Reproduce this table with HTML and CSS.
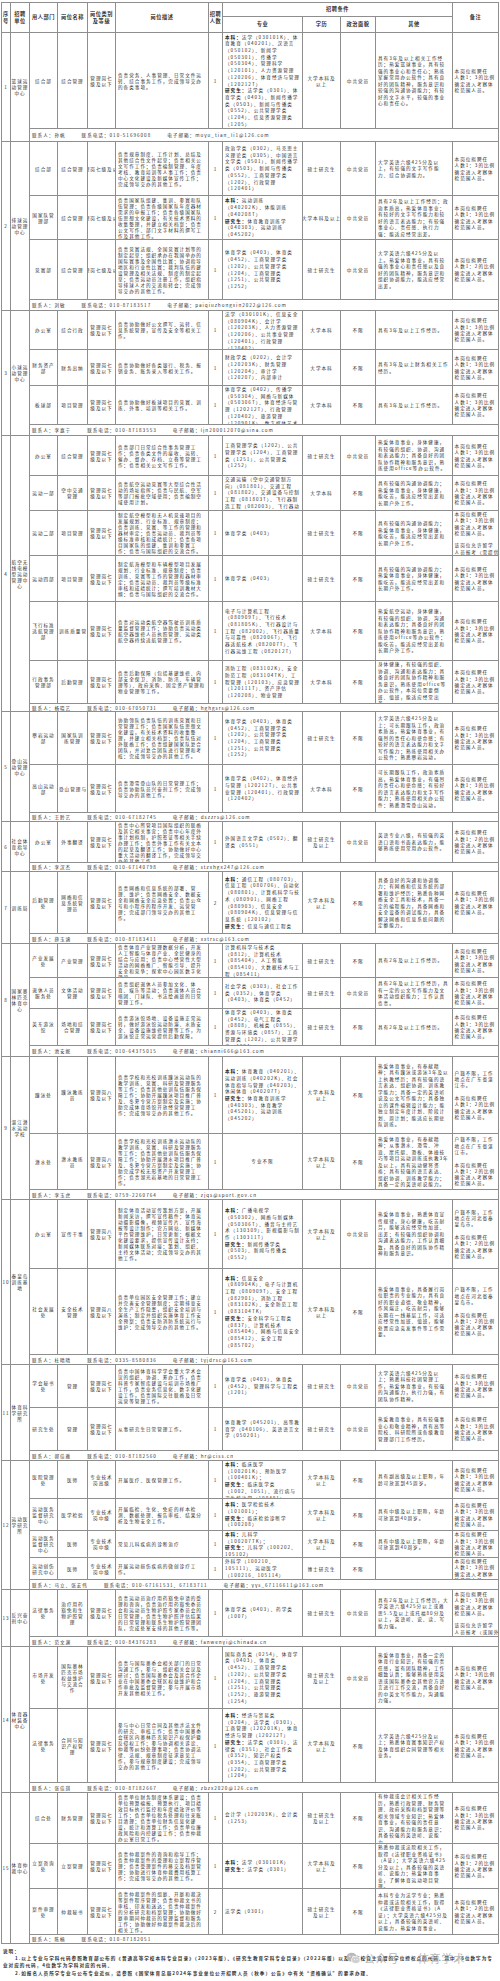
FILE: index.html
```html
<!DOCTYPE html>
<html lang="zh-CN">
<head>
<meta charset="utf-8">
<title>招聘岗位表</title>
<link rel="stylesheet" href="styles.css">
</head>
<body>
<div class="page">
<table class="t">
<colgroup>
<col class="w-n"><col class="w-u"><col class="w-d"><col class="w-p"><col class="w-k"><col class="w-ds"><col class="w-q"><col class="w-m"><col class="w-e"><col class="w-z"><col class="w-o"><col class="w-b">
</colgroup>
<thead>
<tr class="h1">
<th rowspan="2">序号</th><th rowspan="2">招聘单位</th><th rowspan="2">用人部门</th><th rowspan="2">岗位名称</th><th rowspan="2">岗位类别及等级</th><th rowspan="2">岗位描述</th><th rowspan="2">招聘人数</th><th colspan="4">招聘条件</th><th rowspan="2">备注</th>
</tr>
<tr class="h2"><th>专业</th><th>学历</th><th>政治面貌</th><th>其他</th></tr>
</thead>
<tbody>
<!-- 1 -->
<tr style="--h:96px">
<td class="n" rowspan="2">1</td><td class="u" rowspan="2">篮球运动管理中心</td>
<td class="d"><div class="c">综合部</div></td>
<td class="p"><div class="c">综合管理</div></td>
<td class="k"><div class="c">管理岗七级及以下</div></td>
<td class="ds"><div class="c">负责党务、人事管理、日常文件运转、综合事务工作，完成领导交办的各类事项。</div></td>
<td class="q"><div class="c">1</div></td>
<td class="m"><div class="c"><b>本科：</b>法学（030101K）、体育教育（040201）、汉语言（050102）、新闻学（050301）、传播学（050304）、管理科学（120101）、人力资源管理（120206）、体育经济与管理（120212T）<br><b>研究生：</b>法学类（0301）、体育学类（0403）、新闻传播学类（0503）、新闻与传播类（0552）、公共管理学类（1204）、信息资源管理类（1205）</div></td>
<td class="e"><div class="c">大学本科及以上</div></td>
<td class="z"><div class="c">中共党员</div></td>
<td class="o"><div class="c">具有3年及以上相关工作经历；热爱篮球事业，具有较强的事业心和责任心；熟练掌握常用办公软件；具有良好的团队精神，服务意识和较强的沟通协调能力；有较好的文字水平，较强的事业心和责任心。</div></td>
<td class="b"><div class="c">本岗位拟聘任<br>人数1：3的比例<br>确定进入考察体<br>检范围人员。</div></td>
</tr>
<tr class="ct" style="--h:13px"><td colspan="10"><div class="c"><span>联系人：孙帆</span><span>联系电话：010-51696008</span><span>电子邮箱：moyu_tian_li1@126.com</span></div></td></tr>

<!-- 2 -->
<tr style="--h:54px">
<td class="n" rowspan="4">2</td><td class="u" rowspan="4">排球运动管理中心</td>
<td class="d"><div class="c">综合部</div></td>
<td class="p"><div class="c">综合管理</div></td>
<td class="k"><div class="c nw">管理岗七级及以下</div></td>
<td class="ds"><div class="c">负责规章制度、工作计划、总结及其他综合性文件起草；负责相关公文写作工作；负责编制管理、年度考核、教育培训等人事工作；负责中心文化建设及新媒体宣传工作；完成领导交办的其他工作。</div></td>
<td class="q"><div class="c">1</div></td>
<td class="m"><div class="c">政治学类（0302）、马克思主义理论类（0305）、中国语言文学类（0501）、新闻传播学类（0503）、新闻与传播类（0552）、工商管理学类（1202）、行政管理（120401）</div></td>
<td class="e"><div class="c">硕士研究生</div></td>
<td class="z"><div class="c">中共党员</div></td>
<td class="o"><div class="c">大学英语六级425分及以上，有较强的文字写作能力、综合协调能力。</div></td>
<td class="b"><div class="c">本岗位拟聘任<br>人数1：3的比例<br>确定进入考察体<br>检范围人员。</div></td>
</tr>
<tr style="--h:44px">
<td class="d"><div class="c">国家队管理部</div></td>
<td class="p"><div class="c">综合管理</div></td>
<td class="k"><div class="c nw">管理岗七级及以下</div></td>
<td class="ds"><div class="c">负责国家队组建、集训、参赛和队伍管理；负责各级国家队年度器材需求的申报工作；负责各级国家队伍思想文化建设，有关技术资料的收集整理，并建立相关档案；负责公文写作、部门文字材料的撰写工作及其他工作。</div></td>
<td class="q"><div class="c">1</div></td>
<td class="m"><div class="c"><b>本科：</b>运动训练（040202K）、体能训练（040208T）<br><b>研究生：</b>体育教育训练学（040303）、运动训练（045202）</div></td>
<td class="e"><div class="c nw">大学本科及以上</div></td>
<td class="z"><div class="c">中共党员</div></td>
<td class="o"><div class="c">具有2年及以上工作经历；政治素质高，热爱体育事业；有较好的文字写作能力和较好的语言表达能力；有较强事业心、责任感、执行力强；能适应经常出差。</div></td>
<td class="b"><div class="c">本岗位拟聘任<br>人数1：3的比例<br>确定进入考察体<br>检范围人员。</div></td>
</tr>
<tr style="--h:60px">
<td class="d"><div class="c">竞赛部</div></td>
<td class="p"><div class="c">综合管理</div></td>
<td class="k"><div class="c nw">管理岗七级及以下</div></td>
<td class="ds"><div class="c">负责竞赛法规、全国竞赛计划等的制定起草；组织承办在我国举办的国际赛事及全国性比赛；协调指导地区和行业性比赛；裁判队伍的建设管理及相关法规、制度的制定起草；负责运动员注册工作，组织指导排球人才的交流和转会；完成领导交办的其他工作。</div></td>
<td class="q"><div class="c">1</div></td>
<td class="m"><div class="c">体育学类（0403）、体育类（0452）、工商管理学类（1202）、公共管理学类（1204）、工商管理类（1251）、公共管理类（1252）</div></td>
<td class="e"><div class="c">硕士研究生</div></td>
<td class="z"><div class="c">中共党员</div></td>
<td class="o"><div class="c">大学英语六级425分及以上。热爱体育事业，具有较强的事业心和责任感以及良好的团队精神，服务意识和组织协调能力，能适应经常出差。</div></td>
<td class="b"><div class="c">本岗位拟聘任<br>人数1：2的比例<br>确定进入考察体<br>检范围人员。</div></td>
</tr>
<tr class="ct" style="--h:11px"><td colspan="10"><div class="c"><span>联系人：刘敏</span><span>联系电话：010-87183517</span><span>电子邮箱：paiqiuzhongxin2022@126.com</span></div></td></tr>

<!-- 3 -->
<tr style="--h:39px">
<td class="n" rowspan="4">3</td><td class="u" rowspan="4">小球运动管理中心</td>
<td class="d"><div class="c">办公室</div></td>
<td class="p"><div class="c">综合行政</div></td>
<td class="k"><div class="c">管理岗七级及以下</div></td>
<td class="ds"><div class="c">负责协助做好公文撰写、运转、信息系统管理，宣传及安全等相关工作。</div></td>
<td class="q"><div class="c">1</div></td>
<td class="m"><div class="c">法学（030101K）、信息安全（080904K）、会计学（120203K）、人力资源管理（120206）、公共事业管理（120401）、行政管理（120402）</div></td>
<td class="e"><div class="c">大学本科</div></td>
<td class="z"><div class="c">不限</div></td>
<td class="o"><div class="c">具有3年及以上工作经历。</div></td>
<td class="b"><div class="c">本岗位拟聘任<br>人数1：3的比例<br>确定进入考察体<br>检范围人员。</div></td>
</tr>
<tr style="--h:36px">
<td class="d"><div class="c">财务资产部</div></td>
<td class="p"><div class="c">财务出纳</div></td>
<td class="k"><div class="c">管理岗七级及以下</div></td>
<td class="ds"><div class="c">负责协助做好各类银行、税务、报销业务、账务录入等相关工作。</div></td>
<td class="q"><div class="c">1</div></td>
<td class="m"><div class="c">财政学类（0202）、会计学（120203K）、财务管理（120204）、审计学（120207）、内部审计</div></td>
<td class="e"><div class="c">大学本科</div></td>
<td class="z"><div class="c">不限</div></td>
<td class="o"><div class="c">具有3年及以上财务相关工作经历。</div></td>
<td class="b"><div class="c">本岗位拟聘任<br>人数1：3的比例<br>确定进入考察体<br>检范围人员。</div></td>
</tr>
<tr style="--h:39px">
<td class="d"><div class="c">板球部</div></td>
<td class="p"><div class="c">项目管理</div></td>
<td class="k"><div class="c">管理岗七级及以下</div></td>
<td class="ds"><div class="c">负责协助做好板球项目的竞赛、训练、外事、培训等相关工作。</div></td>
<td class="q"><div class="c">1</div></td>
<td class="m"><div class="c">体育学类（0402）、传播学（050304）、网络与新媒体（050306T）、体育经济与管理（120212T）、行政管理（120402）、旅游管理（120901K）、数字媒体艺术</div></td>
<td class="e"><div class="c">大学本科</div></td>
<td class="z"><div class="c">不限</div></td>
<td class="o"><div class="c">具有3年及以上工作经历。</div></td>
<td class="b"><div class="c">本岗位拟聘任<br>人数1：3的比例<br>确定进入考察体<br>检范围人员。</div></td>
</tr>
<tr class="ct" style="--h:11px"><td colspan="10"><div class="c"><span>联系人：李嘉宁</span><span>联系电话：010-87183553</span><span>电子邮箱：ljn200012070@sina.com</span></div></td></tr>

<!-- 4 -->
<tr style="--h:40px">
<td class="n" rowspan="7">4</td><td class="u" rowspan="7">航空无线电模型运动管理中心</td>
<td class="d"><div class="c">办公室</div></td>
<td class="p"><div class="c">综合管理</div></td>
<td class="k"><div class="c">管理岗七级及以下</div></td>
<td class="ds"><div class="c">负责部门日常综合性事务管理工作；负责各类文件的接收、运转、催办、督办、存档、立卷等管理工作；负责相关公文写作工作。</div></td>
<td class="q"><div class="c">1</div></td>
<td class="m"><div class="c">工商管理学类（1202）、公共管理学类（1204）、工商管理类（1251）、公共管理类（1252）</div></td>
<td class="e"><div class="c">硕士研究生</div></td>
<td class="z"><div class="c">中共党员</div></td>
<td class="o"><div class="c">热爱体育事业，身体健康，有较强的组织、协调、沟通和表达能力；具备良好的团队协作精神和服务意识，熟练使用office等办公软件。</div></td>
<td class="b"><div class="c">本岗位拟聘任<br>人数1：3的比例<br>确定进入考察体<br>检范围人员。</div></td>
</tr>
<tr style="--h:35px">
<td class="d"><div class="c">运动一部</div></td>
<td class="p"><div class="c">空中交通管理</div></td>
<td class="k"><div class="c">管理岗七级及以下</div></td>
<td class="ds"><div class="c">负责航空运动竞赛等大型综合性活动的场址指挥；负责与民航、空军等部门报批空域使用；负责编制空域使用计划。</div></td>
<td class="q"><div class="c">1</div></td>
<td class="m"><div class="c">交通运输（空中交通管制方向）（081801）、交通工程（081802）、交通设备与控制工程（081803T）、飞行器制造工程（082003）、飞行器动力工程</div></td>
<td class="e"><div class="c">大学本科</div></td>
<td class="z"><div class="c">不限</div></td>
<td class="o"><div class="c">具有较强的沟通协调能力；热爱体育事业，身体健康，能吃苦，能适应经常出差和长期户外工作。</div></td>
<td class="b"><div class="c">本岗位拟聘任<br>人数1：3的比例<br>确定进入考察体<br>检范围人员。</div></td>
</tr>
<tr style="--h:45px">
<td class="d"><div class="c">运动二部</div></td>
<td class="p"><div class="c">项目管理</div></td>
<td class="k"><div class="c">管理岗七级及以下</div></td>
<td class="ds"><div class="c">制定航空模型和无人机竞速项目的发展规划、行业标准、规章制度；负责训练、竞赛、等工作的管理和器材审定；负责运动员、裁判员等级标准审核和成绩统计；负责各项目国家队的组建、集训和参赛工作；负责与国际组织的交流合作。</div></td>
<td class="q"><div class="c">1</div></td>
<td class="m"><div class="c">体育学类（0403）</div></td>
<td class="e"><div class="c">硕士研究生</div></td>
<td class="z"><div class="c">不限</div></td>
<td class="o"><div class="c">具有较强的沟通协调能力；热爱体育事业，身体健康，能吃苦，能适应经常出差和长期户外工作。</div></td>
<td class="b"><div class="c">本岗位拟聘任<br>人数1：3的比例<br>确定进入考察体<br>检范围人员。<br><br>该岗位允许留学<br>人员报考（需提供学历认证）</div></td>
</tr>
<tr style="--h:46px">
<td class="d"><div class="c">运动四部</div></td>
<td class="p"><div class="c">项目管理</div></td>
<td class="k"><div class="c">管理岗七级及以下</div></td>
<td class="ds"><div class="c">制定航海模型和车辆模型项目发展规划、行业标准、规章制度；负责训练、竞赛等工作的管理和器材审定；负责运动员、裁判员等级标准审核和成绩统计；撰写培训教材大纲；负责与国际组织的交流合作。</div></td>
<td class="q"><div class="c">1</div></td>
<td class="m"><div class="c">体育学类（0403）</div></td>
<td class="e"><div class="c">硕士研究生</div></td>
<td class="z"><div class="c">不限</div></td>
<td class="o"><div class="c">具有较强的沟通协调能力；热爱体育事业，身体健康，能吃苦，能适应经常出差和长期户外工作。</div></td>
<td class="b"><div class="c">本岗位拟聘任<br>人数1：3的比例<br>确定进入考察体<br>检范围人员。</div></td>
</tr>
<tr style="--h:59px">
<td class="d"><div class="c">飞行标准适航管理部</div></td>
<td class="p"><div class="c nwl">训练质量管理</div></td>
<td class="k"><div class="c">管理岗七级及以下</div></td>
<td class="ds"><div class="c">负责对运动类航空器驾驶员训练质量监督管理工作；协助负责运动类航空器维修人员执照管理、运动类航空器持续适航管理工作。</div></td>
<td class="q"><div class="c">1</div></td>
<td class="m"><div class="c">电子与计算机工程（080909T）、飞行技术（081805K）、飞行器设计与工程（082002）、飞行器质量与可靠性（082006T）、飞行器适航技术（082007T）、飞行器运维工程（082012T）</div></td>
<td class="e"><div class="c">大学本科</div></td>
<td class="z"><div class="c">不限</div></td>
<td class="o"><div class="c">热爱航空运动，身体健康，有较强的组织、协调、沟通和表达能力；具备良好的团队协作精神和服务意识，熟练使用office等办公软件；能吃苦，能适应经常出差和长期户外工作。</div></td>
<td class="b"><div class="c">本岗位拟聘任<br>人数1：3的比例<br>确定进入考察体<br>检范围人员。</div></td>
</tr>
<tr style="--h:43px">
<td class="d"><div class="c">行政事务管理部</div></td>
<td class="p"><div class="c">后勤管理</div></td>
<td class="k"><div class="c">管理岗七级及以下</div></td>
<td class="ds"><div class="c">负责后勤保障（包括基建维修、内部安全保卫、消防、防汛、车辆管理等）、政府采购、固定资产管理和物业管理等工作。</div></td>
<td class="q"><div class="c">1</div></td>
<td class="m"><div class="c">消防工程（083102K）、安全防范工程（083104TK）、工程管理（120103）、应急管理（120111T）、资产评估（120208）、物业管理</div></td>
<td class="e"><div class="c">大学本科</div></td>
<td class="z"><div class="c">不限</div></td>
<td class="o"><div class="c">身体健康，有较强的组织、协调、沟通和表达能力；具备良好的团队协作精神和服务意识，熟练使用office等办公软件，本岗位需要倒班、值班，能适应经常出差。</div></td>
<td class="b"><div class="c">本岗位拟聘任<br>人数1：3的比例<br>确定进入考察体<br>检范围人员。</div></td>
</tr>
<tr class="ct" style="--h:8px"><td colspan="10"><div class="c"><span>联系人：杨晓艺</span><span>联系电话：010-67050731</span><span>电子邮箱：hghgsrs@126.com</span></div></td></tr>

<!-- 5 -->
<tr style="--h:53px">
<td class="n" rowspan="3">5</td><td class="u" rowspan="3">登山运动管理中心</td>
<td class="d"><div class="c">攀岩运动部</div></td>
<td class="p"><div class="c">国家队训练管理</div></td>
<td class="k"><div class="c">管理岗七级及以下</div></td>
<td class="ds"><div class="c">协助领队负责队伍的训练竞赛和日常管理工作；负责国家队伍思想文化建设，有关技术资料的收集整理，并建立相关档案；负责队伍对外联络工作；负责组建国家队复合团队，并对复合团队进行管理和考核；完成领导交办的其他工作。</div></td>
<td class="q"><div class="c">1</div></td>
<td class="m"><div class="c">体育学类（0403）、体育类（0452）、工商管理学类（1202）、公共管理学类（1204）、工商管理类（1251）、公共管理类（1252）</div></td>
<td class="e"><div class="c">硕士研究生</div></td>
<td class="z"><div class="c">不限</div></td>
<td class="o"><div class="c">大学英语六级425分及以上；可长期跟队工作，政治素质高，热爱体育事业，有强烈的责任心和使命感；有较好的语言表达能力和文字写作能力；熟练使用相关办公软件；熟悉攀岩运动。</div></td>
<td class="b"><div class="c">本岗位拟聘任<br>人数1：3的比例<br>确定进入考察体<br>检范围人员。</div></td>
</tr>
<tr style="--h:48px">
<td class="d"><div class="c">高山运动部</div></td>
<td class="p"><div class="c nwl">登山管理与服务</div></td>
<td class="k"><div class="c">管理岗七级及以下</div></td>
<td class="ds"><div class="c">负责滑雪登山队的日常管理工作；负责协助队员兴奋剂工作；完成领导交办的其他工作。</div></td>
<td class="q"><div class="c">1</div></td>
<td class="m"><div class="c">体育学类（0402）、体育经济与管理（120212T）、公共事业管理（120401）、行政管理（120402）</div></td>
<td class="e"><div class="c">大学本科</div></td>
<td class="z"><div class="c">不限</div></td>
<td class="o"><div class="c">可长期跟队工作，政治素质高，热爱体育事业，有强烈的责任心和使命感；有较好的语言表达能力和文字写作能力；熟练使用相关办公软件；熟悉滑雪登山运动。</div></td>
<td class="b"><div class="c">本岗位拟聘任<br>人数1：3的比例<br>确定进入考察体<br>检范围人员。</div></td>
</tr>
<tr class="ct" style="--h:9px"><td colspan="10"><div class="c"><span>联系人：王聆艺</span><span>联系电话：010-67182745</span><span>电子邮箱：dszzrs@126.com</span></div></td></tr>

<!-- 6 -->
<tr style="--h:41px">
<td class="n" rowspan="2">6</td><td class="u" rowspan="2">社会体育指导中心</td>
<td class="d"><div class="c">办公室</div></td>
<td class="p"><div class="c">外事翻译</div></td>
<td class="k"><div class="c">管理岗七级及以下</div></td>
<td class="ds"><div class="c">负责中心所管项目国际组织的联络及其它相关事宜；负责中心年度外事计划拟制，护照签证等相关手续办理工作；负责外事工作有关文本的起草及翻译工作；协助做好中心重大活动的翻译工作，完成领导交办的其他工作。</div></td>
<td class="q"><div class="c">1</div></td>
<td class="m"><div class="c">外国语言文学类（0502）、翻译类（0551）</div></td>
<td class="e"><div class="c">硕士研究生及以上</div></td>
<td class="z"><div class="c">中共党员</div></td>
<td class="o"><div class="c">英语专业八级，有较强的英语口语和书面表达能力，能够熟练使用常用办公软件。</div></td>
<td class="b"><div class="c">本岗位拟聘任<br>人数1：2的比例<br>确定进入考察体<br>检范围人员。</div></td>
</tr>
<tr class="ct" style="--h:9px"><td colspan="10"><div class="c"><span>联系人：李汉杰</span><span>联系电话：010-67140798</span><span>电子邮箱：stzxhgx247@126.com</span></div></td></tr>

<!-- 7 -->
<tr style="--h:62px">
<td class="n" rowspan="2">7</td><td class="u" rowspan="2">训练局</td>
<td class="d"><div class="c">后勤管理处</div></td>
<td class="p"><div class="c">网络和信息系统管理员</div></td>
<td class="k"><div class="c">管理岗七级及以下</div></td>
<td class="ds"><div class="c">负责网络和信息系统的部署、管理、维护；负责网络安全、数据安全和网络安全应急处置；负责公众号和小程序的程序开发、运营管理；完成部门领导交办的其他工作。</div></td>
<td class="q"><div class="c">2</div></td>
<td class="m"><div class="c"><b>本科：</b>通信工程（080703）、信息工程（080706）、自动化（080801）、计算机科学与技术（080901）、网络工程（080903）、信息安全（080904K）、信息管理与信息系统（120102）<br><b>研究生：</b>信息与通信工程类</div></td>
<td class="e"><div class="c">大学本科及以上</div></td>
<td class="z"><div class="c">不限</div></td>
<td class="o"><div class="c">具备良好的沟通和协调能力；有网络和信息系统的部署和维护经历；熟悉各种网络安全工具和技术，具备一定的编程能力，具备网络和安全设备的调试能力，具备解决网络和信息系统问题的定额能力。</div></td>
<td class="b"><div class="c">本岗位拟聘任<br>人数1：3的比例<br>确定进入考察体<br>检范围人员。</div></td>
</tr>
<tr class="ct" style="--h:10px"><td colspan="10"><div class="c"><span>联系人：薛玉涵</span><span>联系电话：010-87183411</span><span>电子邮箱：xxtrsc@163.com</span></div></td></tr>

<!-- 8 -->
<tr style="--h:34px">
<td class="n" rowspan="4">8</td><td class="u" rowspan="4">国家奥林匹克体育中心</td>
<td class="d"><div class="c">产业发展处</div></td>
<td class="p"><div class="c">产业管理</div></td>
<td class="k"><div class="c">管理岗七级及以下</div></td>
<td class="ds"><div class="c">负责体育产业管理数据分析，开发人工智能与体育产业、全民健身的结合与应用；负责中心经营性大型活动的网络推广、智能引导、提升安全和竞争；探索中心园区数字化建设。</div></td>
<td class="q"><div class="c">1</div></td>
<td class="m"><div class="c">计算机科学与技术类（0812）、计算机技术（085404）、人工智能（085410）、大数据技术与工程（085411）</div></td>
<td class="e"><div class="c">硕士研究生</div></td>
<td class="z"><div class="c">不限</div></td>
<td class="o"><div class="c">具有2年及以上工作经历。</div></td>
<td class="b"><div class="c">本岗位拟聘任<br>人数1：3的比例<br>确定进入考察体<br>检范围人员。</div></td>
</tr>
<tr style="--h:31px">
<td class="d"><div class="c">退休人员服务处</div></td>
<td class="p"><div class="c">文体活动管理</div></td>
<td class="k"><div class="c">管理岗七级及以下</div></td>
<td class="ds"><div class="c">负责组织退休人员参加文化、体育、娱乐等活动；负责退休人员合唱团、门球队、书法绘画班的日常管理工作。</div></td>
<td class="q"><div class="c">1</div></td>
<td class="m"><div class="c">社会学类（0303）、社会工作类（0352）、体育学类（0403）、体育类（0452）</div></td>
<td class="e"><div class="c">硕士研究生</div></td>
<td class="z"><div class="c">中共党员</div></td>
<td class="o"><div class="c">具有2年及以上工作经历，具有一定的公文写作能力及文体活动组织能力；工作认真负责。</div></td>
<td class="b"><div class="c">本岗位拟聘任<br>人数1：3的比例<br>确定进入考察体<br>检范围人员。</div></td>
</tr>
<tr style="--h:37px">
<td class="d"><div class="c">英东游泳馆</div></td>
<td class="p"><div class="c">场地和综合管理</div></td>
<td class="k"><div class="c">管理岗七级及以下</div></td>
<td class="ds"><div class="c">负责游泳馆场地、设备设施正常运转，做好游泳馆运动防溺、水质安全、设备设施维修管理等工作，为游泳馆正常运营提供后勤保障。</div></td>
<td class="q"><div class="c">1</div></td>
<td class="m"><div class="c">体育学类（0403）、体育类（0452）、电气工程类（0808）、机械类（0855）、资源与环境类（0857）、工商管理类（1202）、公共管理学类（1204）</div></td>
<td class="e"><div class="c">硕士研究生</div></td>
<td class="z"><div class="c">不限</div></td>
<td class="o"><div class="c">具有2年及以上工作经历。</div></td>
<td class="b"><div class="c">本岗位拟聘任<br>人数1：3的比例<br>确定进入考察体<br>检范围人员。</div></td>
</tr>
<tr class="ct" style="--h:11px"><td colspan="10"><div class="c"><span>联系人：池安妮</span><span>联系电话：010-64375015</span><span>电子邮箱：chianni666@163.com</span></div></td></tr>

<!-- 9 -->
<tr style="--h:77px">
<td class="n" rowspan="3">9</td><td class="u" rowspan="3">湛江潜水运动学校</td>
<td class="d"><div class="c">蹼泳处</div></td>
<td class="p"><div class="c">蹼泳教练员</div></td>
<td class="k"><div class="c">管理岗八级及以下</div></td>
<td class="ds"><div class="c">负责学校和光校训练蹼泳运动队的教学训练、竞赛、科研及管理服务等工作；负责其他驻训队伍服务保障工作；协助开展蹼泳项目推广普及、冬夏令营方案制定及实施；协助完成体育场馆开放经营管理工作；完成领导交办的其他工作。</div></td>
<td class="q"><div class="c">1</div></td>
<td class="m"><div class="c"><b>本科：</b>体育教育（040201）、运动训练（040202K）、社会体育指导与管理（040203）、休闲体育（040207T）<br><b>研究生：</b>体育教育训练学（040303）、体育教学（045201）、运动训练（045202）</div></td>
<td class="e"><div class="c">大学本科及以上</div></td>
<td class="z"><div class="c">不限</div></td>
<td class="o"><div class="c">热爱体育事业，有奉献精神；具有蹼泳或游泳3年及以上执教经历；具有较强的语言表达、组织协调、训练教学能力；具备一定的英语听说及公文写作能力；具备独立的课件编辑设计能力；能独立制定年度计划、阶段计划、周计划；能适应长期驻队训练。</div></td>
<td class="b"><div class="c">户籍不限，工作<br>地点在广东省湛<br>江市。<br><br>本岗位拟聘任<br>人数1：2的比例<br>确定进入考察体<br>检范围人员。</div></td>
</tr>
<tr style="--h:56px">
<td class="d"><div class="c">潜水处</div></td>
<td class="p"><div class="c">潜水教练员</div></td>
<td class="k"><div class="c">管理岗八级及以下</div></td>
<td class="ds"><div class="c">负责学校和光校训练潜水运动队的教学训练、竞赛、科研及管理服务等工作；负责其他驻训队伍服务保障工作；协助开展潜水项目推广普及、冬夏令营方案制定及实施；协助完成学校无形资产开发管理工作；负责湖光岩基地的日常管理工作。</div></td>
<td class="q"><div class="c">1</div></td>
<td class="m"><div class="c mc">专业不限</div></td>
<td class="e"><div class="c">大学本科及以上</div></td>
<td class="z"><div class="c">不限</div></td>
<td class="o"><div class="c">热爱体育事业，有奉献精神；从事潜水、滑雪、冲浪、摩托艇、滑板、体操技巧等项目运动训练或执教3年及以上，具有运动健将资格；具有较强的语言表达、组织协调、训练教学能力；具备一定的英语听说能力。</div></td>
<td class="b"><div class="c">户籍不限，工作<br>地点在广东省湛<br>江市。<br><br>本岗位拟聘任<br>人数1：2的比例<br>确定进入考察体<br>检范围人员。</div></td>
</tr>
<tr class="ct" style="--h:10px"><td colspan="10"><div class="c"><span>联系人：李玉虎</span><span>联系电话：0759-2260764</span><span>电子邮箱：zjqs@sport.gov.cn</span></div></td></tr>

<!-- 10 -->
<tr style="--h:69px">
<td class="n" rowspan="3">10</td><td class="u" rowspan="3">秦皇岛训练基地</td>
<td class="d"><div class="c">办公室</div></td>
<td class="p"><div class="c">宣传干事</div></td>
<td class="k"><div class="c">管理岗八级及以下</div></td>
<td class="ds"><div class="c">制定体育活动宣传策划方案，开展新闻采访，撰写宣传稿件；体育运动摄影摄像，视频宣传片、宣传海报等设计制作；官方网站、新媒体平台管理维护，日常更新；根据文化建设要求，提供宣传设计支持；新闻媒体联系对接；策划、组织、主持文体活动；完成领导交办的其他工作。</div></td>
<td class="q"><div class="c">1</div></td>
<td class="m"><div class="c"><b>本科：</b>广播电视学（050302）、网络与新媒体（050306T）、播音与主持艺术（130309）、影视摄影与制作（130311T）<br><b>研究生：</b>新闻传播学类（0503）、新闻与传播类（0552）</div></td>
<td class="e"><div class="c">大学本科及以上</div></td>
<td class="z"><div class="c">中共党员</div></td>
<td class="o"><div class="c">热爱体育事业，熟悉体育宣传规律，身心健康，吃苦耐劳，能够适应经常性加班、出差；有较强的组织协调和沟通表达能力，工作认真细致，具备良好的团队协作精神和服务意识。</div></td>
<td class="b"><div class="c">户籍不限，工作<br>地点在河北省秦<br>皇岛市。<br><br>本岗位拟聘任<br>人数1：2的比例<br>确定进入考察体<br>检范围人员。</div></td>
</tr>
<tr style="--h:86px">
<td class="d"><div class="c">社会发展处</div></td>
<td class="p"><div class="c">安全技术管理</div></td>
<td class="k"><div class="c">管理岗八级及以下</div></td>
<td class="ds"><div class="c">负责单位园区安全管理工作；建立并完善安全管理制度；定期排查安全生产工作隐患，组织安全培训与演练；制定并组织实施体育工作安全预案；负责安防消防系统运行与维护；完成领导交办的其他工作。</div></td>
<td class="q"><div class="c">1</div></td>
<td class="m"><div class="c"><b>本科：</b>信息安全（080904K）、电子与计算机工程（080909T）、安全工程（082901）、消防工程（083102K）、安全防范工程（083104TK）<br><b>研究生：</b>安全科学与工程类（0837）、计算机技术（085404）、网络与信息安全（085412）、安全工程（085702）</div></td>
<td class="e"><div class="c">大学本科及以上</div></td>
<td class="z"><div class="c">不限</div></td>
<td class="o"><div class="c">热爱体育事业，具备履行岗位职责的专业能力，具有良好的职业道德、敬业精神，作风端正，吃苦耐劳，能够长期在一线基层工作，可适应经常性加班、值班，能够处置应急突发事件等工作需要。</div></td>
<td class="b"><div class="c">户籍不限，工作<br>地点在河北省秦<br>皇岛市。<br><br>本岗位拟聘任<br>人数1：2的比例<br>确定进入考察体<br>检范围人员。</div></td>
</tr>
<tr class="ct" style="--h:10px"><td colspan="10"><div class="c"><span>联系人：杜晴晴</span><span>联系电话：0335-8580836</span><span>电子邮箱：tyjdrsc@163.com</span></div></td></tr>

<!-- 11 -->
<tr style="--h:43px">
<td class="n" rowspan="3">11</td><td class="u" rowspan="3">体育科学研究所</td>
<td class="d"><div class="c">学会秘书处</div></td>
<td class="p"><div class="c">管理</div></td>
<td class="k"><div class="c">管理岗七级及以下</div></td>
<td class="ds"><div class="c">负责中国体育科学学会重大学术会议的组织、协调、筹办工作，负责科普专家智库建设与培训市场推广工作，负责业务信息化、数字化建设工作，负责国际交往联络及日常运营等管理工作。</div></td>
<td class="q"><div class="c">1</div></td>
<td class="m"><div class="c">体育学类（0403）、体育类（0452）、管理科学与工程类（1201）</div></td>
<td class="e"><div class="c">硕士研究生</div></td>
<td class="z"><div class="c">中共党员</div></td>
<td class="o"><div class="c">大学英语六级425分及以上；熟悉科技社团管理工作，热爱体育事业，有较强的沟通能力，执行力强，有团队协作精神。</div></td>
<td class="b"><div class="c">本岗位拟聘任<br>人数1：3的比例<br>确定进入考察体<br>检范围人员。</div></td>
</tr>
<tr style="--h:43px">
<td class="d"><div class="c">研究生处</div></td>
<td class="p"><div class="c">管理</div></td>
<td class="k"><div class="c">管理岗七级及以下</div></td>
<td class="ds"><div class="c">从事研究生日常管理工作。</div></td>
<td class="q"><div class="c">1</div></td>
<td class="m"><div class="c">体育教学（045201）、高等教育学（040106）、英语语言文学（050201）</div></td>
<td class="e"><div class="c">硕士研究生</div></td>
<td class="z"><div class="c">中共党员</div></td>
<td class="o"><div class="c">热爱教育事业，具有较强事业心和敬业精神，具有高等院校、科研院所或各级教育管理部门工作经历。</div></td>
<td class="b"><div class="c">本岗位拟聘任<br>人数1：3的比例<br>确定进入考察体<br>检范围人员。</div></td>
</tr>
<tr class="ct" style="--h:10px"><td colspan="10"><div class="c"><span>联系人：郝佳雅</span><span>联系电话：010-87182560</span><span>电子邮箱：hr@ciss.cn</span></div></td></tr>

<!-- 12 -->
<tr style="--h:38px">
<td class="n" rowspan="5">12</td><td class="u" rowspan="5">运动医学研究所</td>
<td class="d"><div class="c">医院管理处</div></td>
<td class="p"><div class="c">医师</div></td>
<td class="k"><div class="c">专业技术岗高级</div></td>
<td class="ds"><div class="c">开展医疗、医保管理工作。</div></td>
<td class="q"><div class="c">1</div></td>
<td class="m"><div class="c"><b>本科：</b>临床医学（100201K）、预防医学（100401K）；<br><b>研究生：</b>临床医学类（1002、1051）、流行病与卫生统计学（100401）</div></td>
<td class="e"><div class="c">大学本科及以上</div></td>
<td class="z"><div class="c">不限</div></td>
<td class="o"><div class="c">具有副高级及以上职称，年龄可放宽到45周岁。</div></td>
<td class="b"><div class="c">本岗位拟聘任<br>人数1：3的比例<br>确定进入考察体<br>检范围人员。</div></td>
</tr>
<tr style="--h:32px">
<td class="d"><div class="c">运动医务监督研究中心</div></td>
<td class="p"><div class="c">医学检验</div></td>
<td class="k"><div class="c">专业技术岗中级</div></td>
<td class="ds"><div class="c">开展临检、生化、免疫的样本检测、数据处理、报告审核、结果分析及生物安全工作。</div></td>
<td class="q"><div class="c">1</div></td>
<td class="m"><div class="c"><b>本科：</b>医学检验技术（101001）；<br><b>研究生：</b>临床检验诊断学（100208）</div></td>
<td class="e"><div class="c">大学本科及以上</div></td>
<td class="z"><div class="c">不限</div></td>
<td class="o"><div class="c">具有中级及以上职称，年龄可放宽到40周岁。</div></td>
<td class="b"><div class="c">本岗位拟聘任<br>人数1：3的比例<br>确定进入考察体<br>检范围人员。</div></td>
</tr>
<tr style="--h:27px">
<td class="d"><div class="c">运动医务监督研究中心</div></td>
<td class="p"><div class="c">医师</div></td>
<td class="k"><div class="c">专业技术岗中级</div></td>
<td class="ds"><div class="c">常见儿科疾病的诊断治疗</div></td>
<td class="q"><div class="c">1</div></td>
<td class="m"><div class="c"><b>本科：</b>儿科学（100207TK）；<br><b>研究生：</b>儿科学（100202、105102）</div></td>
<td class="e"><div class="c">大学本科及以上</div></td>
<td class="z"><div class="c">不限</div></td>
<td class="o"><div class="c">具有中级及以上职称，年龄可放宽到40周岁。</div></td>
<td class="b"><div class="c">本岗位拟聘任<br>人数1：3的比例<br>确定进入考察体<br>检范围人员。</div></td>
</tr>
<tr style="--h:22px">
<td class="d"><div class="c">运动创伤研究中心</div></td>
<td class="p"><div class="c">医师</div></td>
<td class="k"><div class="c">专业技术岗中级</div></td>
<td class="ds"><div class="c">开展运动损伤疾病的微创诊疗工作。</div></td>
<td class="q"><div class="c">1</div></td>
<td class="m"><div class="c">外科学（100210、105111）、运动医学（100216、105114）</div></td>
<td class="e"><div class="c">博士研究生</div></td>
<td class="z"><div class="c">不限</div></td>
<td class="o"><div class="c"></div></td>
<td class="b"><div class="c">本岗位拟聘任<br>人数1：3的比例<br>确定进入考察体<br>检范围人员。</div></td>
</tr>
<tr class="ct" style="--h:10px"><td colspan="10"><div class="c"><span>联系人：马立、张宏伟</span><span>联系电话：010-67161531、67183711</span><span>电子邮箱：yys_67116611@163.com</span></div></td></tr>

<!-- 13 -->
<tr style="--h:47px">
<td class="n" rowspan="2">13</td><td class="u" rowspan="2">反兴奋剂中心</td>
<td class="d"><div class="c">法律事务处</div></td>
<td class="p"><div class="c">治疗用药豁免和生物护照管理</div></td>
<td class="k"><div class="c">管理岗七级及以下</div></td>
<td class="ds"><div class="c">负责运动员治疗用药豁免申请的受理和咨询，负责治疗用药豁免委员会和运动员生物护照专家委员会的日常管理，负责生物护照评估结果的日常管理和联系生物护照管理团队，完成处室安排的其他工作等。</div></td>
<td class="q"><div class="c">1</div></td>
<td class="m"><div class="c">体育学类（0403）、药学类（1007）</div></td>
<td class="e"><div class="c">硕士研究生</div></td>
<td class="z"><div class="c">中共党员</div></td>
<td class="o"><div class="c">具有2年及以上工作经历，大学英语六级425分以上或雅思5.5及以上或托福80分及以上，英语听、说、读、写能力强。</div></td>
<td class="b"><div class="c">本岗位拟聘任<br>人数1：3的比例<br>确定进入考察体<br>检范围人员。<br><br>该岗位允许留学<br>人员报考（或国外学历）</div></td>
</tr>
<tr class="ct" style="--h:10px"><td colspan="10"><div class="c"><span>联系人：范文渊</span><span>联系电话：010-84376283</span><span>电子邮箱：fanwenyi@chinada.cn</span></div></td></tr>

<!-- 14 -->
<tr style="--h:62px">
<td class="n" rowspan="3">14</td><td class="u" rowspan="3">体育器材装备中心</td>
<td class="d"><div class="c">市场开发处</div></td>
<td class="p"><div class="c">国际奥林匹克市场权益维护与交流合作</div></td>
<td class="k"><div class="c">管理岗七级及以下</div></td>
<td class="ds"><div class="c">负责与国际奥委会相关部门的日常沟通工作，参与、组织相关会议及研讨；负责国际奥委会及其合作企业在中国奥委会辖区权益维护和合作审批及监督管理；参与开展市场开发其他相关工作。</div></td>
<td class="q"><div class="c">1</div></td>
<td class="m"><div class="c">国际商务类（0254）、体育学类（0403）、体育类（0452）、工商管理学类（1202）、公共管理学类（1204）、工商管理类（1251）、公共管理类（1252）、旅游管理类（1254）</div></td>
<td class="e"><div class="c">硕士研究生及以上</div></td>
<td class="z"><div class="c">中共党员</div></td>
<td class="o"><div class="c">热爱体育事业，具备一定的体育行业知识，有较强的责任感，富有团队精神，工作细致认真；能够熟练使用英语或国际奥委会其他官方语言进行工作交流，具备良好的中英文写作能力，沟通能力强。</div></td>
<td class="b"><div class="c">本岗位拟聘任<br>人数1：3的比例<br>确定进入考察体<br>检范围人员。</div></td>
</tr>
<tr style="--h:74px">
<td class="d"><div class="c">法律事务处</div></td>
<td class="p"><div class="c">合同与知识产权管理</div></td>
<td class="k"><div class="c">管理岗七级及以下</div></td>
<td class="ds"><div class="c">参与中心日常合同及其他涉法文件的研究、审核工作；负责中国奥委会辖区内奥林匹克知识产权保护暨反侵权工作；参与协调相关诉讼、仲裁等纠纷处理事项；负责协调法律、法规、规章制度征求意见工作，参与规章制度建设；完成领导交办的其他工作。</div></td>
<td class="q"><div class="c">1</div></td>
<td class="m"><div class="c"><b>本科：</b>经济与贸易类（0204）、法学类（0301）、工商管理（120201K）、体育经济与管理（120212T）<br><b>研究生：</b>法学类（0301）、法律类（0351）、社会工作类（0352）、知识产权类（0354）、工商管理学类（1202）、公共管理学类（1204）</div></td>
<td class="e"><div class="c">大学本科及以上</div></td>
<td class="z"><div class="c">不限</div></td>
<td class="o"><div class="c">大学英语六级425分及以上；熟悉体育赛事知识产权及体育组织合同管理等相关业务。</div></td>
<td class="b"><div class="c">本岗位拟聘任<br>人数1：3的比例<br>确定进入考察体<br>检范围人员。</div></td>
</tr>
<tr class="ct" style="--h:10px"><td colspan="10"><div class="c"><span>联系人：张佳琪</span><span>联系电话：010-87182667</span><span>电子邮箱：zbzx2020@126.com</span></div></td></tr>

<!-- 15 -->
<tr style="--h:51px">
<td class="n" rowspan="4">15</td><td class="u" rowspan="4">体育仲裁中心</td>
<td class="d"><div class="c">综合处</div></td>
<td class="p"><div class="c">财务管理</div></td>
<td class="k"><div class="c">管理岗七级及以下</div></td>
<td class="ds"><div class="c">负责单位财务制度体系建设；负责单位预算编报、预算执行、项目绩效目标执行监控和年度绩效评价等工作；负责单位税务处理和往来账目清理；负责单位财务信息化建设，统计和清算工作；负责单位廉政风险和内控建设工作；负责仲裁办公室日常工作。</div></td>
<td class="q"><div class="c">1</div></td>
<td class="m"><div class="c">会计学（120203K）、会计类（1253）</div></td>
<td class="e"><div class="c">硕士研究生及以上</div></td>
<td class="z"><div class="c">不限</div></td>
<td class="o"><div class="c">有仲裁或会计相关工作经历，熟悉行政管理、财务管理、政府采购和档案管理等相关领域专业知识；热爱体育事业，有较强的责任意识、沟通能力和服务意识；具备较强的英语听、说能力。</div></td>
<td class="b"><div class="c">本岗位拟聘任<br>人数1：3的比例<br>确定进入考察体<br>检范围人员。</div></td>
</tr>
<tr style="--h:45px">
<td class="d"><div class="c">立案咨询处</div></td>
<td class="p"><div class="c">立案管理</div></td>
<td class="k"><div class="c">管理岗七级及以下</div></td>
<td class="ds"><div class="c">负责仲裁案件的咨询和指导工作；负责仲裁案件的受理和立案程序管理；负责受理案件的移交及档案管理；协助进行体育仲裁费用核算工作；完成领导交办的其他工作。</div></td>
<td class="q"><div class="c">1</div></td>
<td class="m"><div class="c"><b>本科：</b>法学（030101K）<br><b>研究生：</b>法学类（0301）</div></td>
<td class="e"><div class="c">大学本科及以上</div></td>
<td class="z"><div class="c">不限</div></td>
<td class="o"><div class="c">熟悉仲裁或法院相关工作，取得《法律职业资格证书》（A证）；大学英语六级425分及以上，具备较强的英语听、说能力；热爱体育事业，了解体育运动项目管理。</div></td>
<td class="b"><div class="c">本岗位拟聘任<br>人数1：2的比例<br>确定进入考察体<br>检范围人员。</div></td>
</tr>
<tr style="--h:46px">
<td class="d"><div class="c">案件审理处</div></td>
<td class="p"><div class="c">仲裁秘书</div></td>
<td class="k"><div class="c">管理岗七级及以下</div></td>
<td class="ds"><div class="c">负责仲裁案件的组庭、开庭和裁决等案件程序管理；负责仲裁文书的审核、印发和送达；负责仲裁案件的分析研究和档案管理；协助做好庭审期间仲裁员的管理监督和服务工作；协助做好仲裁案件裁决后的相关工作。</div></td>
<td class="q"><div class="c">2</div></td>
<td class="m"><div class="c">法学类（0301）</div></td>
<td class="e"><div class="c">硕士研究生及以上</div></td>
<td class="z"><div class="c">不限</div></td>
<td class="o"><div class="c">本科专业为法学专业；熟悉仲裁或法院相关工作，取得《法律职业资格证书》（A证）；大学英语六级425分及以上，具备较强的英语听、说能力，热爱体育事业。</div></td>
<td class="b"><div class="c">本岗位拟聘任<br>人数1：2的比例<br>确定进入考察体<br>检范围人员。</div></td>
</tr>
<tr class="ct" style="--h:9px"><td colspan="10"><div class="c"><span>联系人：陈楠</span><span>联系电话：010-87182051</span></div></td></tr>
</tbody>
</table>

<div class="note">
<p class="nt">说明：</p>
<p class="np">1.以上专业与学科代码参照教育部公布的《普通高等学校本科专业目录》（2023年版）、《研究生教育学科专业目录》（2022年版）以及各高校自主设置的学位授权点的代码。其中，6位数字为专业对应的代码，4位数字为学科对应的代码。</p>
<p class="np">2.如报名人员所学专业与公布专业近似，请参照《国家体育总局2024年事业单位公开招聘人员（秋季）公告》中有关“资格确认”的要求办理。</p>
</div>

<div class="wm">
<svg class="wm-ico" viewBox="0 0 16 14" width="15" height="13"><ellipse cx="6" cy="5.5" rx="5.6" ry="4.6" fill="#b9b9b9"/><ellipse cx="10.5" cy="8.6" rx="4.6" ry="3.8" fill="#cfcfcf" stroke="#fff" stroke-width="0.8"/><circle cx="4" cy="4.6" r="0.7" fill="#fff"/><circle cx="7.6" cy="4.6" r="0.7" fill="#fff"/><circle cx="9.2" cy="8.2" r="0.55" fill="#fff"/><circle cx="11.9" cy="8.2" r="0.55" fill="#fff"/></svg>
<span>公众号 · 体育学术</span>
</div>
</div>
</body>
</html>
```

FILE: styles.css
```css
* { box-sizing: border-box; }
html, body { margin: 0; padding: 0; background: #fff; }
body {
  width: 500px;
  font-family: "Noto Sans CJK SC", "Noto Sans", sans-serif;
  color: #2e2e2e;
}
.page { position: relative; padding: 2px 2px 0 1px; }

.t {
  border-collapse: collapse;
  table-layout: fixed;
  width: 497px;
  font-size: 4.6px;
  line-height: 6px;
  letter-spacing: 1px;
}
.w-n { width: 9px; }  .w-u { width: 19px; } .w-d { width: 28px; } .w-p { width: 30px; }
.w-k { width: 28px; } .w-ds { width: 93px; } .w-q { width: 14px; } .w-m { width: 80px; }
.w-e { width: 38px; } .w-z { width: 35px; } .w-o { width: 77px; } .w-b { width: 46px; }

.t th, .t td {
  border: 1px solid #8e8e8e;
  padding: 0;
  vertical-align: middle;
  overflow: hidden;
}
.t th {
  font-size: 5.2px;
  line-height: 6.4px;
  letter-spacing: 0.6px;
  font-weight: 700;
  color: #333;
  padding: 0 0.5px;
  text-align: center;
}
.h1 { height: 14px; }
.h2 { height: 16px; }

.t tbody tr { height: var(--h); }
.c {
  max-height: calc(var(--h) - 1px);
  overflow: hidden;
  padding: 0 2px;
}
.n, .u { text-align: center; padding: 0 2.5px; }
.d .c, .p .c, .k .c, .q .c, .e .c, .z .c { text-align: center; }
.m .c { line-height: 6.7px; }
.o .c { line-height: 6.5px; }
.b .c { line-height: 6.3px; white-space: nowrap; padding: 0 1px 0 1.5px; }
.mc { text-align: center; }
.nw { display: flex; justify-content: center; white-space: nowrap; padding: 0; }
.nwl { white-space: nowrap; text-align: left !important; padding: 0 0 0 1px; }
.t b { font-weight: 700; color: #222; }

.ct .c {
  display: flex;
  align-items: center;
  gap: 16px;
  white-space: nowrap;
  padding-left: 2px;
  line-height: 6px;
}

.note {
  margin-top: 4px;
  font-size: 4.6px;
  line-height: 7.2px;
  letter-spacing: 1px;
  font-weight: 700;
  color: #333;
  padding: 0 2px;
}
.note p { margin: 0; }
.np { text-indent: 12px; }

.wm {
  position: absolute;
  left: 346px;
  top: 1951px;
  display: flex;
  align-items: center;
  gap: 3px;
  font-family: "Noto Sans CJK SC", sans-serif;
  font-size: 11px;
  line-height: 14px;
  letter-spacing: 0.8px;
  color: rgba(160, 160, 160, 0.75);
}
.wm-ico { display: block; }
```
